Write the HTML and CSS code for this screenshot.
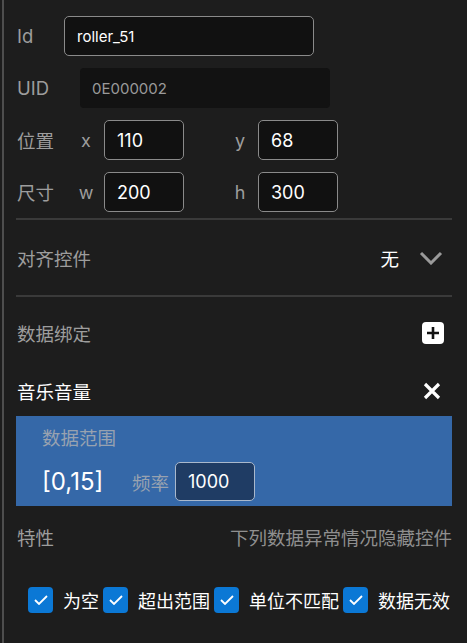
FILE: index.html
```html
<!DOCTYPE html>
<html lang="zh">
  <head>
    <meta charset="UTF-8" />
    <meta name="viewport" content="width=device-width, initial-scale=1.0" />
    <title>属性</title>
    <link rel="stylesheet" href="styles.css">
  </head>
  <body>
    <div class="panel">
      <div class="row">
        <span class="label label-id">Id</span>
        <div class="field field-id">roller_51</div>
      </div>
      <div class="row">
        <span class="label label-uid">UID</span>
        <div class="field field-uid">0E000002</div>
      </div>
      <div class="row">
        <span class="label label-xy">位置</span>
        <span class="axis">x</span>
        <div class="field field-num">110</div>
        <span class="axis axis-2">y</span>
        <div class="field field-num">68</div>
      </div>
      <div class="row row-size">
        <span class="label label-xy">尺寸</span>
        <span class="axis">w</span>
        <div class="field field-num">200</div>
        <span class="axis axis-2">h</span>
        <div class="field field-num">300</div>
      </div>

      <div class="divider"></div>

      <div class="line line-align">
        <span class="label">对齐控件</span>
        <div class="select">
          <span class="select-value">无</span>
          <svg class="chevron" width="24" height="14" viewBox="0 0 24 14">
            <path d="M2 2 L12 12 L22 2" fill="none" stroke="#9a9a9a" stroke-width="3" />
          </svg>
        </div>
      </div>

      <div class="divider"></div>

      <div class="line line-bind">
        <span class="label">数据绑定</span>
        <button class="add-btn">
          <svg width="22" height="22" viewBox="0 0 22 22">
            <rect width="22" height="22" rx="4" fill="#fff" />
            <path d="M11 5 V17 M5 11 H17" stroke="#111" stroke-width="2.6" />
          </svg>
        </button>
      </div>

      <div class="line line-bound">
        <span class="bound-name">音乐音量</span>
        <svg class="close" width="18" height="18" viewBox="0 0 18 18">
          <path d="M2 2 L16 16 M16 2 L2 16" stroke="#fff" stroke-width="3.2" />
        </svg>
      </div>

      <div class="range-box">
        <div class="range-title">数据范围</div>
        <div class="range-row">
          <span class="range-value">[0,15]</span>
          <span class="freq-label">频率</span>
          <div class="field field-freq">1000</div>
        </div>
      </div>

      <div class="line line-traits">
        <span class="label">特性</span>
        <span class="hint">下列数据异常情况隐藏控件</span>
      </div>

      <div class="checks">
        <label class="check"><span class="box"><svg width="14" height="10" viewBox="0 0 14 10"><path d="M1 5 L5 9 L13 1" fill="none" stroke="#fff" stroke-width="1.8" /></svg></span>为空</label>
        <label class="check"><span class="box"><svg width="14" height="10" viewBox="0 0 14 10"><path d="M1 5 L5 9 L13 1" fill="none" stroke="#fff" stroke-width="1.8" /></svg></span>超出范围</label>
        <label class="check"><span class="box"><svg width="14" height="10" viewBox="0 0 14 10"><path d="M1 5 L5 9 L13 1" fill="none" stroke="#fff" stroke-width="1.8" /></svg></span>单位不匹配</label>
        <label class="check"><span class="box"><svg width="14" height="10" viewBox="0 0 14 10"><path d="M1 5 L5 9 L13 1" fill="none" stroke="#fff" stroke-width="1.8" /></svg></span>数据无效</label>
      </div>
    </div>
  </body>
</html>
```

FILE: styles.css
```css
* {
  box-sizing: border-box;
}
body {
  margin: 0;
  background: #1d1d1d;
  font-family: Inter, "Noto Sans CJK SC", sans-serif;
  color: #9d9d9d;
  height: 643px;
  overflow: hidden;
}

.panel {
  margin-left: 2px;
  border-left: 2px solid #4e4e4e;
  padding: 16px 15px 0 12px;
  height: 643px;
}

.row {
  display: flex;
  align-items: center;
  height: 40px;
  margin-bottom: 12px;
  padding-left: 1px;
}
.row-size {
  margin-bottom: 6px;
}

.label {
  font-size: 18.5px;
  color: #9d9d9d;
}
.label-id {
  width: 47px;
}
.label-uid {
  width: 63px;
}
.label-xy {
  width: 55px;
}

.field {
  height: 40px;
  display: flex;
  align-items: center;
  border: 1px solid #8a8a8a;
  border-radius: 5px;
  background: #111;
  color: #fff;
}
.field-id {
  width: 250px;
  padding-left: 12px;
  font-size: 15px;
}
.field-uid {
  width: 250px;
  padding-left: 12px;
  border: none;
  border-radius: 4px;
  background: #121212;
  color: #9a9a9a;
  font-size: 15px;
}
.field-num {
  width: 80px;
  padding-left: 12px;
  font-size: 18px;
}

.axis {
  width: 28px;
  text-align: center;
  font-size: 18px;
  margin-right: 4px;
}
.axis-2 {
  margin-left: 42px;
}

.divider {
  height: 2px;
  background: #3a3a3a;
}

.line {
  display: flex;
  align-items: center;
  justify-content: space-between;
  padding-left: 1px;
}
.line-align {
  height: 75px;
}
.select {
  display: flex;
  align-items: center;
  gap: 20px;
  margin-right: 9px;
}
.select-value {
  font-size: 18.5px;
  color: #fff;
}
.line-bind {
  height: 72px;
}
.add-btn {
  border: none;
  background: none;
  padding: 0;
  margin-right: 8px;
  display: flex;
  cursor: pointer;
}
.line-bound {
  height: 44px;
  margin-bottom: 3px;
}
.bound-name {
  font-size: 18.5px;
  color: #fff;
}
.close {
  margin-right: 11px;
}

.range-box {
  background: #3568a8;
  height: 90px;
  padding: 10px 0 0 26px;
}
.range-title {
  font-size: 18.5px;
  line-height: 24px;
  color: #98a2b0;
}
.range-row {
  display: flex;
  align-items: center;
  margin-top: 12px;
}
.range-value {
  font-size: 24px;
  color: #fff;
  width: 90px;
}
.freq-label {
  font-size: 18.5px;
  color: #98a2b0;
  margin-right: 6px;
}
.field-freq {
  width: 80px;
  height: 39px;
  padding-left: 12px;
  font-size: 18px;
  background: #1f3c64;
  border-color: #a9b8cc;
}

.line-traits {
  height: 62px;
}
.hint {
  font-size: 18.5px;
  color: #8f8f8f;
}

.checks {
  display: flex;
  align-items: center;
  gap: 4px;
  padding-left: 12px;
  margin-top: 19px;
}
.check {
  display: flex;
  align-items: center;
  font-size: 18px;
  color: #fff;
}
.box {
  width: 25px;
  height: 26px;
  border-radius: 4px;
  background: #0b78d5;
  display: flex;
  align-items: center;
  justify-content: center;
  margin-right: 10px;
}
```
